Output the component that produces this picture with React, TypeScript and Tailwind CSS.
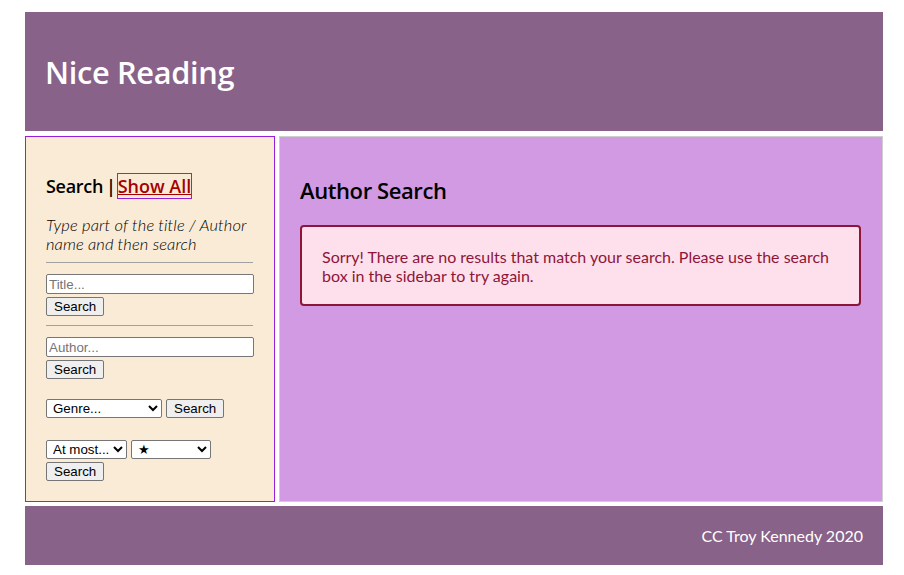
import { useState } from "react";

const heading = "font-['Open_Sans',sans-serif]";
const body = "font-['Lato',sans-serif]";
const control = "font-['Liberation_Sans',Arial,sans-serif] text-[13.33px]";

const SearchButton = () => (
  <button
    type="button"
    className={`${control} px-[7px] h-[19px] leading-[15px] border border-[#767676] rounded-[2px] bg-[#efefef] text-black`}
  >
    Search
  </button>
);

export default function App() {
  const [title, setTitle] = useState("");
  const [author, setAuthor] = useState("");

  return (
    <div className="min-h-[575px] bg-white pl-[25px] pr-[21px] pt-[12px]">
      <header className="h-[119px] bg-[#886288] flex items-center px-[20px]">
        <h1 className={`${heading} text-white text-[30.7px] font-semibold tracking-[-0.3px] mt-[1px]`}>
          Nice Reading
        </h1>
      </header>

      <div className="grid grid-cols-[250px_1fr] gap-[4px] mt-[5px]">
        <aside className="h-[366px] bg-[#faebd7] border border-[#9a1ed8] px-[20px] pt-[37px]">
          <h3 className={`${heading} text-[18px] font-semibold text-black leading-[24px] tracking-[-0.3px]`}>
            Search<span className="ml-[3px] mr-[2px]">|</span>
            <a href="#" className="text-[#a50000] underline outline outline-1 outline-[#9a1ed8] tracking-[0px]">
              Show All
            </a>
          </h3>
          <p className={`${body} italic font-light text-[16.5px] leading-[19px] text-black mt-[18px] tracking-[0.1px]`}>
            Type part of the title / Author name and then search
          </p>
          <hr className="border-t border-[#a0a0a0] mt-[8px] w-[207px]" />
          <div className="mt-[11px] flex flex-col items-start gap-[3px]">
            <input
              value={title}
              onChange={(e) => setTitle(e.target.value)}
              placeholder="Title..."
              className={`${control} w-[208px] h-[20px] px-[2px] bg-white border border-[#767676] rounded-[2px] placeholder:text-[#757575]`}
            />
            <SearchButton />
          </div>
          <hr className="border-t border-[#a0a0a0] mt-[9px] w-[207px]" />
          <div className="mt-[11px] flex flex-col items-start gap-[3px]">
            <input
              value={author}
              onChange={(e) => setAuthor(e.target.value)}
              placeholder="Author..."
              className={`${control} w-[208px] h-[20px] px-[2px] bg-white border border-[#767676] rounded-[2px] placeholder:text-[#757575]`}
            />
            <SearchButton />
          </div>
          <div className="mt-[20px] flex items-center gap-[4px]">
            <select
              defaultValue="genre"
              className={`${control} w-[116px] h-[19px] bg-white border border-[#767676] rounded-[2px] pl-[2px]`}
            >
              <option value="genre">Genre...</option>
              <option value="fantasy">Fantasy</option>
              <option value="crime">Crime</option>
            </select>
            <SearchButton />
          </div>
          <div className="mt-[22px] flex items-center gap-[4px]">
            <select
              defaultValue="atmost"
              className={`${control} w-[81px] h-[19px] bg-white border border-[#767676] rounded-[2px] pl-[2px]`}
            >
              <option value="atmost">At most...</option>
              <option value="atleast">At least...</option>
            </select>
            <select
              defaultValue="1"
              className={`${control} w-[80px] h-[19px] bg-white border border-[#767676] rounded-[2px] pl-[2px]`}
            >
              <option value="1">★</option>
              <option value="2">★★</option>
              <option value="3">★★★</option>
            </select>
          </div>
          <div className="mt-[3px] flex">
            <SearchButton />
          </div>
        </aside>

        <main className="h-[366px] bg-[#d29ae3] border border-[#cfcfcf] px-[20px] pt-[38px]">
          <h2 className={`${heading} text-[22px] font-semibold text-black leading-[30px] tracking-[-0.4px]`}>
            Author Search
          </h2>
          <div className="mt-[20px] mr-[1px] h-[81px] bg-[#fde0ec] border-2 border-[#8f1538] rounded-[4px] px-[20px] pt-[20px]">
            <p className={`${body} text-[16px] leading-[19px] text-[#8f1538]`}>
              Sorry! There are no results that match your search. Please use the search box in the sidebar to try again.
            </p>
          </div>
        </main>
      </div>

      <footer className="mt-[4px] h-[59px] bg-[#886288] flex items-center justify-end px-[20px]">
        <p className={`${body} text-white text-[16px]`}>CC Troy Kennedy 2020</p>
      </footer>
    </div>
  );
}
